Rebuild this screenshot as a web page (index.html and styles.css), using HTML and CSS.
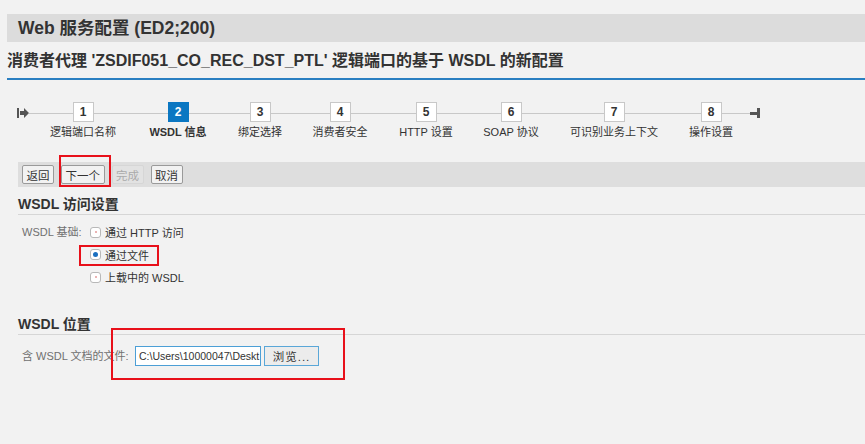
FILE: index.html
```html
<!DOCTYPE html>
<html lang="zh-CN">
<head>
    <meta charset="UTF-8">
    <title>Web 服务配置 (ED2;200)</title>
    <link rel="stylesheet" href="styles.css">
</head>
<body>
    <div class="page">
        <div class="title-bar">Web 服务配置 (ED2;200)</div>

        <h1 class="subtitle">消费者代理 'ZSDIF051_CO_REC_DST_PTL' 逻辑端口的基于 WSDL 的新配置</h1>

        <div class="roadmap">
            <svg class="road-start" width="12" height="10" viewBox="0 0 12 10">
                <rect x="0" y="0" width="2" height="10" fill="#555"/>
                <path d="M3 3 H7 V0 L12 5 L7 10 V7 H3 Z" fill="#555"/>
            </svg>
            <div class="steps">
                <div class="step"><span class="step-num">1</span><span class="step-label">逻辑端口名称</span></div>
                <div class="step active"><span class="step-num">2</span><span class="step-label">WSDL 信息</span></div>
                <div class="step"><span class="step-num">3</span><span class="step-label">绑定选择</span></div>
                <div class="step"><span class="step-num">4</span><span class="step-label">消费者安全</span></div>
                <div class="step"><span class="step-num">5</span><span class="step-label">HTTP 设置</span></div>
                <div class="step"><span class="step-num">6</span><span class="step-label">SOAP 协议</span></div>
                <div class="step"><span class="step-num">7</span><span class="step-label">可识别业务上下文</span></div>
                <div class="step"><span class="step-num">8</span><span class="step-label">操作设置</span></div>
            </div>
            <svg class="road-end" width="10" height="10" viewBox="0 0 10 10">
                <rect x="0" y="4" width="8" height="3" fill="#555"/>
                <rect x="7" y="0" width="3" height="10" fill="#555"/>
            </svg>
        </div>

        <div class="content">
            <div class="toolbar">
                <button class="btn">返回</button>
                <button class="btn">下一个</button>
                <button class="btn" disabled>完成</button>
                <button class="btn">取消</button>
            </div>

            <h2 class="section-title">WSDL 访问设置</h2>
            <div class="form-row">
                <span class="field-label">WSDL 基础:</span>
                <div class="radio-group">
                    <label class="radio"><span class="radio-box"></span>通过 HTTP 访问</label>
                    <label class="radio"><span class="radio-box checked"></span>通过文件</label>
                    <label class="radio"><span class="radio-box"></span>上载中的 WSDL</label>
                </div>
            </div>

            <h2 class="section-title location">WSDL 位置</h2>
            <div class="form-row file-row">
                <span class="field-label wide">含 WSDL 文档的文件:</span>
                <div class="file-input">C:\Users\10000047\Deskt</div>
                <button class="btn browse">浏览...</button>
            </div>
        </div>
    </div>

    <!-- red marks from the screenshot -->
    <div class="mark mark-next"></div>
    <div class="mark mark-file"></div>
    <div class="mark mark-location"></div>
</body>
</html>
```

FILE: styles.css
```css
* {
    margin: 0;
    padding: 0;
    box-sizing: border-box;
}

body {
    font-family: "Liberation Sans", "Noto Sans CJK SC", sans-serif;
    background: #f2f2f2;
    color: #333;
    font-size: 11px;
    width: 865px;
    height: 444px;
    overflow: hidden;
    position: relative;
}

.page {
    padding: 14px 0 0 7px;
}

.title-bar {
    height: 28px;
    line-height: 28px;
    background: #dcdcdc;
    padding-left: 11px;
    font-size: 17.5px;
    font-weight: 700;
    color: #333;
}

.subtitle {
    height: 38px;
    line-height: 37px;
    font-size: 16px;
    font-weight: 700;
    color: #333;
    border-bottom: 2px solid #2a7fc1;
}

/* roadmap */
.roadmap {
    height: 70px;
    padding: 22px 0 0 10px;
    display: flex;
    align-items: flex-start;
    background: linear-gradient(#c8c8c8, #c8c8c8) no-repeat;
    background-size: 721px 1px;
    background-position: 22px 33px;
}

.road-start {
    margin: 6px 7px 0 0;
    flex-shrink: 0;
}

.road-end {
    margin-top: 6px;
    flex-shrink: 0;
}

.steps {
    display: grid;
    grid-template-columns: 94px 96px 68px 92px 80px 90px 116px 78px;
}

.step {
    display: flex;
    flex-direction: column;
    align-items: center;
}

.step-num {
    width: 21px;
    height: 20px;
    line-height: 18px;
    text-align: center;
    background: #fff;
    border: 1px solid #c8c8c8;
    font-weight: 700;
    font-size: 12px;
    color: #333;
}

.step-label {
    margin-top: 3px;
    line-height: 14px;
    white-space: nowrap;
    color: #333;
}

.step.active .step-num {
    background: #0b77c2;
    border-color: #0b77c2;
    color: #fff;
}

.step.active .step-label {
    font-weight: 700;
}

/* content */
.content {
    margin-top: 12px;
    padding-left: 11px;
}

.toolbar {
    height: 25px;
    background: #dedede;
    padding: 3px 4px;
    display: flex;
    gap: 7px;
}

.btn {
    font-family: "Liberation Sans", "Noto Sans CJK SC", sans-serif;
    font-size: 11.5px;
    height: 19px;
    padding: 0 3.5px;
    color: #333;
    background: #f2f2f2;
    border: 1px solid #9a9a9a;
    border-radius: 2px;
}

.btn:disabled {
    color: #aaa;
    border-color: #d6d6d6;
    background: #e2e2e2;
}

.section-title {
    margin-top: 7px;
    height: 21px;
    line-height: 20px;
    font-size: 14px;
    font-weight: 700;
    color: #333;
    border-bottom: 1px solid #d6d6d6;
}

.section-title.location {
    margin-top: 25px;
}

.form-row {
    display: flex;
    padding-left: 4px;
    margin-top: 6px;
}

.field-label {
    width: 68px;
    line-height: 22px;
    color: #707070;
    white-space: nowrap;
}

.field-label.wide {
    width: 113px;
    line-height: 20px;
}

.radio-group {
    display: flex;
    flex-direction: column;
}

.radio {
    height: 22.5px;
    display: flex;
    align-items: center;
    gap: 4px;
    color: #333;
}

.radio-box {
    width: 11px;
    height: 11px;
    background: #fff;
    border: 1px solid #b8b8b8;
    border-radius: 3px;
    display: flex;
    align-items: center;
    justify-content: center;
}

.radio-box::after {
    content: "";
    width: 2px;
    height: 2px;
    border-radius: 50%;
    background: #e59a9a;
}

.radio-box.checked::after {
    width: 5px;
    height: 5px;
    background: #1a6fc0;
}

.file-row {
    margin-top: 11px;
    align-items: center;
}

.file-input {
    width: 126px;
    height: 20px;
    line-height: 18px;
    padding-left: 3px;
    background: #fff;
    border: 1px solid #4c9fd6;
    white-space: nowrap;
    overflow: hidden;
    color: #333;
    font-size: 10.5px;
}

.btn.browse {
    margin-left: 3px;
    width: 55px;
    height: 20px;
    border: 1px solid #5aa7d8;
    border-radius: 0;
    background: #ececec;
    letter-spacing: 1px;
}

/* annotation boxes */
.mark {
    position: absolute;
    border: 2px solid #e8101a;
}

.mark-next {
    left: 59px;
    top: 155px;
    width: 52px;
    height: 32px;
}

.mark-file {
    left: 79px;
    top: 245px;
    width: 80px;
    height: 21px;
}

.mark-location {
    left: 111px;
    top: 328px;
    width: 234px;
    height: 52px;
}
```
